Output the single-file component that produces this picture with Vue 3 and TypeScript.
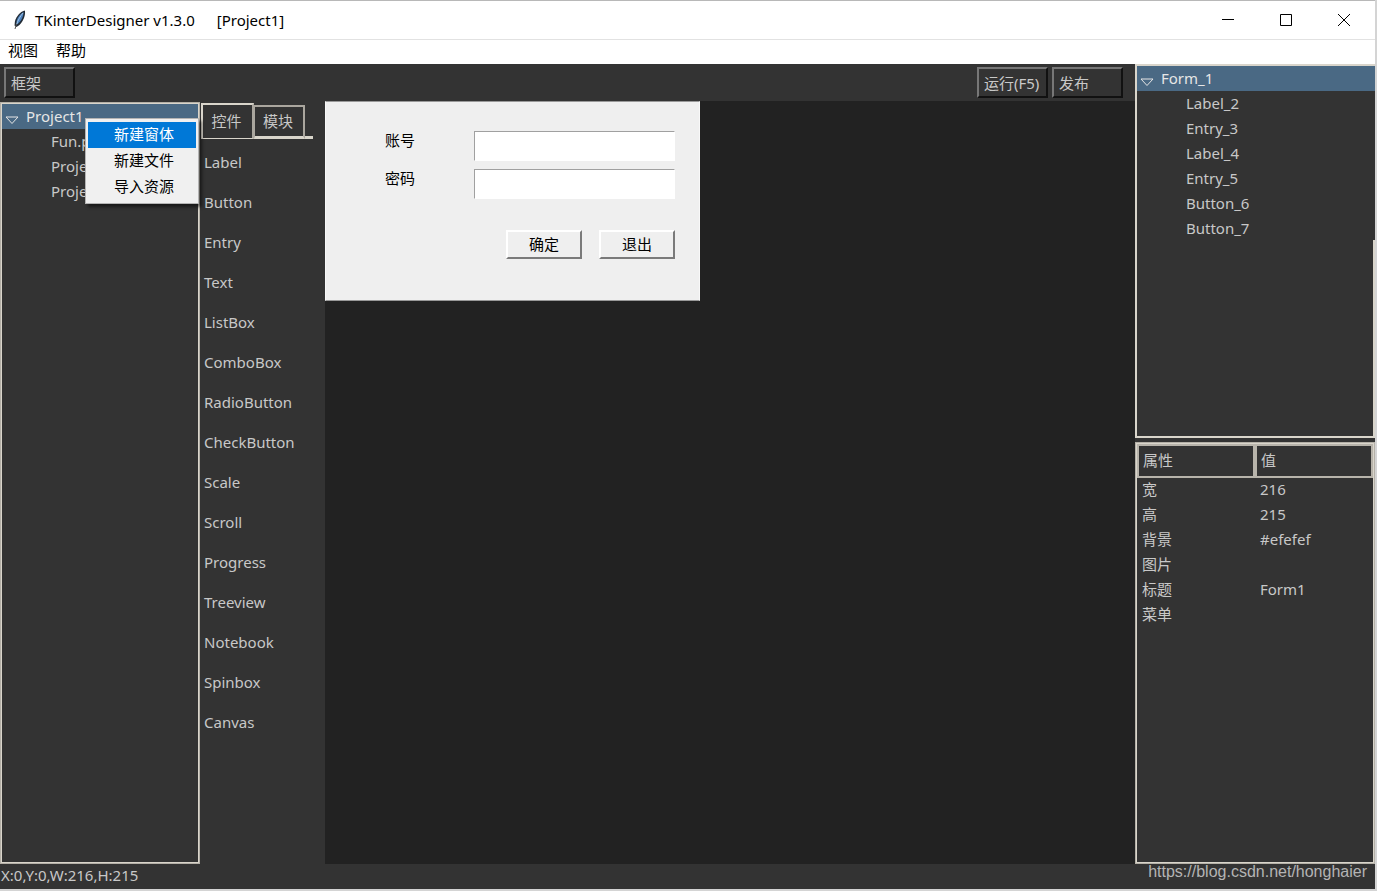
<script setup lang="ts">
import { ref } from 'vue'

interface Property {
  name: string
  value: string
}

const menus: string[] = ['视图', '帮助']
const files: string[] = ['Fun.p', 'Proje', 'Proje']
const contextItems: string[] = ['新建窗体', '新建文件', '导入资源']
const activeItem = ref(0)
const widgets: string[] = [
  'Label', 'Button', 'Entry', 'Text', 'ListBox', 'ComboBox', 'RadioButton', 'CheckButton',
  'Scale', 'Scroll', 'Progress', 'Treeview', 'Notebook', 'Spinbox', 'Canvas',
]
const controls: string[] = ['Label_2', 'Entry_3', 'Label_4', 'Entry_5', 'Button_6', 'Button_7']
const properties: Property[] = [
  { name: '宽', value: '216' },
  { name: '高', value: '215' },
  { name: '背景', value: '#efefef' },
  { name: '图片', value: '' },
  { name: '标题', value: 'Form1' },
  { name: '菜单', value: '' },
]
const account = ref('')
const password = ref('')
</script>

<template>
  <div class="window">
    <header class="titlebar">
      <svg class="feather" width="16" height="20" viewBox="0 0 16 20" aria-hidden="true">
        <path d="M12.500 0.500C8 2 4.500 6 3 11L2.500 15.500L4.500 17L7.500 15C11 11.500 13.500 6 13 1Z" fill="#222b35" />
        <path d="M11.500 2C8 4 5.500 7.500 4.500 11.500L5 14.500C9 11.500 11.500 7 11.500 2Z" fill="#4a80bd" />
        <path d="M11 3C8.500 6 6 10 4.500 14.500" fill="none" stroke="#a3c3e4" stroke-width="1" />
        <path d="M4.500 14L3 19" stroke="#555" stroke-width="1" />
      </svg>
      <h1 class="title"><span>TKinterDesigner v1.3.0</span><span>[Project1]</span></h1>
      <div class="window-buttons">
        <button type="button" aria-label="最小化">
          <svg width="14" height="14" viewBox="0 0 14 14"><path d="M1 6.500H13" stroke="#000" /></svg>
        </button>
        <button type="button" aria-label="最大化">
          <svg width="14" height="14" viewBox="0 0 14 14"><path d="M1.500 1.500H12.500V12.500H1.500Z" fill="none" stroke="#000" /></svg>
        </button>
        <button type="button" aria-label="关闭">
          <svg width="14" height="14" viewBox="0 0 14 14"><path d="M1 1L13 13M13 1L1 13" stroke="#000" /></svg>
        </button>
      </div>
    </header>

    <nav class="menubar">
      <button v-for="menu in menus" :key="menu" type="button">{{ menu }}</button>
    </nav>

    <main class="workspace">
      <div class="main-area">
        <div class="toolbar">
          <button type="button" class="tool">框架</button>
          <span class="spacer"></span>
          <button type="button" class="tool">运行(F5)</button>
          <button type="button" class="tool">发布</button>
        </div>
        <div class="columns">
          <section class="project frame">
            <div class="node root">
              <svg class="arrow" width="14" height="9" viewBox="0 0 14 9"><path d="M1 1H13L7 7.500Z" fill="none" stroke="#e6e6e6" /></svg>
              <span>Project1</span>
            </div>
            <div v-for="(file, index) in files" :key="index" class="node child">{{ file }}</div>
            <div class="context-menu" role="menu">
              <button
                v-for="(item, index) in contextItems"
                :key="item"
                type="button"
                role="menuitem"
                :class="{ active: index === activeItem }"
                @mouseenter="activeItem = index"
              >{{ item }}</button>
            </div>
          </section>

          <section class="palette">
            <div class="tabs" role="tablist">
              <button type="button" class="tab selected" role="tab" aria-selected="true">控件</button>
              <button type="button" class="tab" role="tab" aria-selected="false">模块</button>
              <span class="tab-line"></span>
            </div>
            <ul class="widgets">
              <li v-for="widget in widgets" :key="widget">{{ widget }}</li>
            </ul>
          </section>

          <section class="canvas">
            <form class="form" @submit.prevent>
              <div class="field">
                <label for="account">账号</label>
                <input id="account" v-model="account" type="text" />
              </div>
              <div class="field">
                <label for="password">密码</label>
                <input id="password" v-model="password" type="text" />
              </div>
              <div class="actions">
                <button type="button">确定</button>
                <button type="button">退出</button>
              </div>
            </form>
          </section>
        </div>
      </div>

      <aside class="sidebar">
        <section class="controls frame">
          <div class="node root">
            <svg class="arrow" width="14" height="9" viewBox="0 0 14 9"><path d="M1 1H13L7 7.500Z" fill="none" stroke="#e6e6e6" /></svg>
            <span>Form_1</span>
          </div>
          <div v-for="control in controls" :key="control" class="node child">{{ control }}</div>
        </section>
        <section class="properties frame">
          <table>
            <thead>
              <tr><th scope="col">属性</th><th scope="col">值</th></tr>
            </thead>
            <tbody>
              <tr v-for="property in properties" :key="property.name">
                <td>{{ property.name }}</td>
                <td>{{ property.value }}</td>
              </tr>
            </tbody>
          </table>
        </section>
      </aside>
    </main>

    <footer class="statusbar">
      <span>X:0,Y:0,W:216,H:215</span>
      <a href="https://blog.csdn.net/honghaier">https://blog.csdn.net/honghaier</a>
    </footer>
  </div>
</template>

<style>
body {
  margin: 0;
  background: #d4d4d4;
}
</style>

<style scoped>
.window {
  display: flex;
  flex-direction: column;
  box-sizing: border-box;
  min-height: 100vh;
  padding: 0 2px 2px 0;
  font-family: "Noto Sans", "Noto Sans CJK SC", sans-serif;
  font-size: 15px;
  line-height: 24px;
  color: #c8c8c8;
}
.window * {
  box-sizing: border-box;
}
button,
input {
  margin: 0;
  font: inherit;
  color: inherit;
}
.titlebar {
  display: flex;
  align-items: center;
  height: 40px;
  padding-left: 12px;
  background: #fff;
  border-top: 1px solid #b8b8b8;
  border-bottom: 1px solid #e2e2e2;
  color: #000;
}
.title {
  display: flex;
  gap: 22px;
  margin: 0 0 0 7px;
  font-size: 15px;
  font-weight: 400;
  line-height: 22px;
}
.window-buttons {
  display: flex;
  margin: 0 2px 0 auto;
}
.window-buttons button {
  display: flex;
  align-items: center;
  justify-content: center;
  width: 58px;
  height: 38px;
  padding: 0;
  border: 0;
  background: none;
}
.menubar {
  display: flex;
  align-items: flex-start;
  gap: 18px;
  height: 24px;
  padding-left: 8px;
  background: #fff;
  color: #000;
}
.menubar button {
  padding: 0;
  border: 0;
  background: none;
  line-height: 21px;
}
.workspace {
  display: flex;
  flex: 1;
  background: #333;
}
.main-area {
  display: flex;
  flex: 1;
  flex-direction: column;
  min-width: 0;
}
.toolbar {
  display: flex;
  gap: 4px;
  height: 37px;
  padding: 3px 12px 3px 4px;
}
.spacer {
  flex: 1;
}
.tool {
  width: 71px;
  height: 31px;
  padding: 0 0 0 5px;
  border: 2px solid;
  border-color: #777 #111 #111 #777;
  background: #333;
  text-align: left;
  white-space: nowrap;
}
.columns {
  display: flex;
  flex: 1;
}
.frame {
  border: 2px solid #d9d5cb;
  outline: 1px solid #b4b0a7;
  outline-offset: -1px;
}
.project {
  position: relative;
  width: 200px;
  margin-top: 1px;
}
.node {
  height: 25px;
  padding-left: 49px;
  white-space: nowrap;
}
.root {
  display: flex;
  padding-left: 3px;
  background: #4a6984;
  color: #e6e6e6;
}
.arrow {
  margin: 12px 7px 0 0;
}
.context-menu {
  position: absolute;
  top: 14px;
  left: 83px;
  width: 114px;
  padding: 3px 2px;
  border: 1px solid #b4b4b4;
  background: #f0f0f0;
  box-shadow: 3px 3px 3px rgba(0, 0, 0, 0.5);
  color: #000;
}
.context-menu button {
  display: block;
  width: 100%;
  height: 26px;
  padding: 0 0 2px 26px;
  border: 0;
  background: none;
  text-align: left;
}
.context-menu .active {
  background: #0078d7;
  color: #fff;
}
.palette {
  width: 125px;
}
.tabs {
  display: flex;
  align-items: flex-end;
  height: 38px;
  padding: 2px 12px 0 1px;
}
.tab {
  width: 51px;
  height: 34px;
  padding: 0 2px 2px 0;
  border: 2px solid #aaa69e;
  border-width: 2px 2px 3px 1px;
  border-bottom-color: #d9d5cb;
  background: #333;
}
.tab.selected {
  width: 53px;
  height: 36px;
  border-width: 2px 2px 1px 2px;
  border-color: #d9d5cb #aaa69e #d9d5cb #d9d5cb;
}
.tab-line {
  flex: 1;
  height: 3px;
  background: #d9d5cb;
}
.widgets {
  margin: 3px 0 0;
  padding: 0 0 0 4px;
  list-style: none;
}
.widgets li {
  height: 40px;
  line-height: 40px;
}
.canvas {
  flex: 1;
  background: #222;
}
.form {
  display: flex;
  flex-direction: column;
  gap: 8px;
  width: 375px;
  height: 200px;
  padding: 29px 24px 0;
  border: 1px solid #f8f8f8;
  border-top-color: #999;
  border-bottom-color: #999;
  background: #efefef;
  color: #000;
}
.field {
  display: flex;
  justify-content: space-between;
}
.field label {
  width: 100px;
  line-height: 18px;
  text-align: center;
}
.field input {
  width: 201px;
  height: 30px;
  border: 1px solid;
  border-color: #a0a0a0 #fff #fff #a0a0a0;
  background: #fff;
  outline: none;
}
.actions {
  display: flex;
  justify-content: flex-end;
  gap: 17px;
  margin-top: 23px;
}
.actions button {
  width: 76px;
  height: 29px;
  padding: 0 0 2px;
  border: 2px solid;
  border-color: #fff #7a7a7a #7a7a7a #fff;
  background: #efefef;
}
.sidebar {
  display: flex;
  flex-direction: column;
  gap: 4px;
  width: 240px;
}
.controls {
  height: 374px;
  border-right: 0;
  outline: none;
  background: linear-gradient(#d9d5cb, #d9d5cb) right 174px / 2px 100% no-repeat;
}
.properties {
  flex: 1;
}
table {
  width: 100%;
  border-collapse: separate;
  border-spacing: 0;
  table-layout: fixed;
}
th {
  height: 34px;
  padding: 0 4px 2px;
  border: 2px solid #b8b4ab;
  font-weight: 400;
  text-align: left;
}
td {
  height: 25px;
  padding: 0 0 2px 5px;
  line-height: 23px;
}
.statusbar {
  display: flex;
  justify-content: space-between;
  height: 25px;
  padding: 0 8px 0 1px;
  background: #333;
}
.statusbar span {
  line-height: 22px;
}
.statusbar a {
  font-family: "Liberation Sans", sans-serif;
  font-size: 16px;
  line-height: 16px;
  color: #b4b4b4;
  text-decoration: none;
}
</style>
